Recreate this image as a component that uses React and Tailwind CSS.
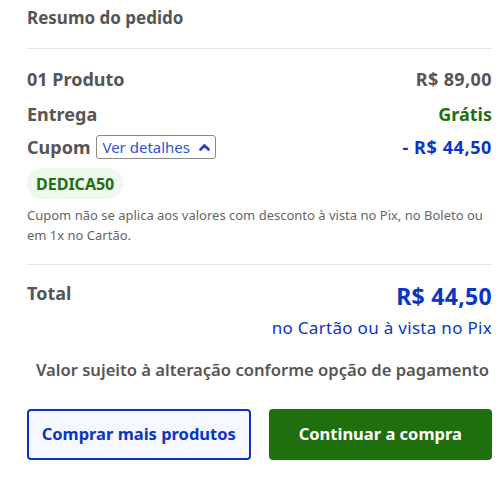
import React from "react";

const Row = ({ label, children, className = "" }) => (
  <div className={`flex items-center justify-between ${className}`}>
    {label}
    {children}
  </div>
);

const OrderSummary = () => {
  return (
    <div className="w-[500px] h-[483px] bg-white pl-[27px] pr-[8px] font-['Noto_Sans',sans-serif] text-[#555]">
      {/* Title */}
      <div className="pt-[6px] h-[48px] text-[17px] font-bold leading-[24px]">
        Resumo do pedido
      </div>
      <div className="h-px bg-[#e2e2e2]" />

      {/* Lines */}
      <Row className="mt-[18px] h-[24px]" label={<span className="text-[18px] font-bold">01 Produto</span>}>
        <span className="text-[18px] font-bold tracking-[0.4px]">R$ 89,00</span>
      </Row>
      <Row className="mt-[11px] h-[24px]" label={<span className="text-[18px] font-bold">Entrega</span>}>
        <span className="text-[18px] font-bold text-[#1f6f12]">Grátis</span>
      </Row>
      <Row
        className="mt-[9px] h-[24px]"
        label={
          <div className="flex items-center gap-[6px]">
            <span className="text-[18px] font-bold">Cupom</span>
            <button className="flex items-center gap-[9px] h-[24px] px-[5px] border border-[#8a8a8a] rounded-[3px] text-[15px] text-[#2f55d4] leading-none">
              Ver detalhes
              <svg width="11" height="8" viewBox="0 0 11 8" fill="none">
                <path d="M1.5 6.5 5.5 2.5 9.5 6.5" stroke="#1a3fc9" strokeWidth="2.6" strokeLinecap="round" strokeLinejoin="round" />
              </svg>
            </button>
          </div>
        }
      >
        <span className="text-[18px] font-bold tracking-[0.6px] text-[#0a35c4]">- R$ 44,50</span>
      </Row>

      {/* Coupon code */}
      <div className="mt-[9px] inline-flex items-center h-[31px] px-[9px] rounded-full bg-[#eef8ec] text-[16px] font-bold text-[#1f6f12]">
        DEDICA50
      </div>
      <p className="mt-[6px] text-[13px] leading-[20px] text-[#666]">
        Cupom não se aplica aos valores com desconto à vista no Pix, no Boleto ou em 1x no Cartão.
      </p>

      <div className="mt-[19px] h-px bg-[#e2e2e2]" />

      {/* Total */}
      <div className="mt-[16px] flex justify-between">
        <span className="text-[18px] font-bold leading-[24px]">Total</span>
        <div className="flex flex-col items-end">
          <span className="text-[23px] font-bold leading-[30px] tracking-[0.3px] text-[#0a35c4]">R$ 44,50</span>
          <span className="mt-[2px] text-[17px] leading-[30px] tracking-[0.3px] text-[#0a35c4]">no Cartão ou à vista no Pix</span>
        </div>
      </div>

      <p className="mt-[15px] text-center whitespace-nowrap text-[16.6px] font-semibold leading-[24px] text-[#555] pl-[6px]">
        Valor sujeito à alteração conforme opção de pagamento
      </p>

      {/* Actions */}
      <div className="mt-[27px] grid grid-cols-2 gap-[18px]">
        <button className="h-[51px] rounded-[4px] border-2 border-[#0a35c4] bg-[#f5f8ff] text-[16.5px] font-bold text-[#0a35c4]">
          Comprar mais produtos
        </button>
        <button className="h-[51px] rounded-[4px] bg-[#1f6f0e] text-[16.5px] font-bold text-white">
          Continuar a compra
        </button>
      </div>
    </div>
  );
};

export default function App() {
  return <OrderSummary />;
}
